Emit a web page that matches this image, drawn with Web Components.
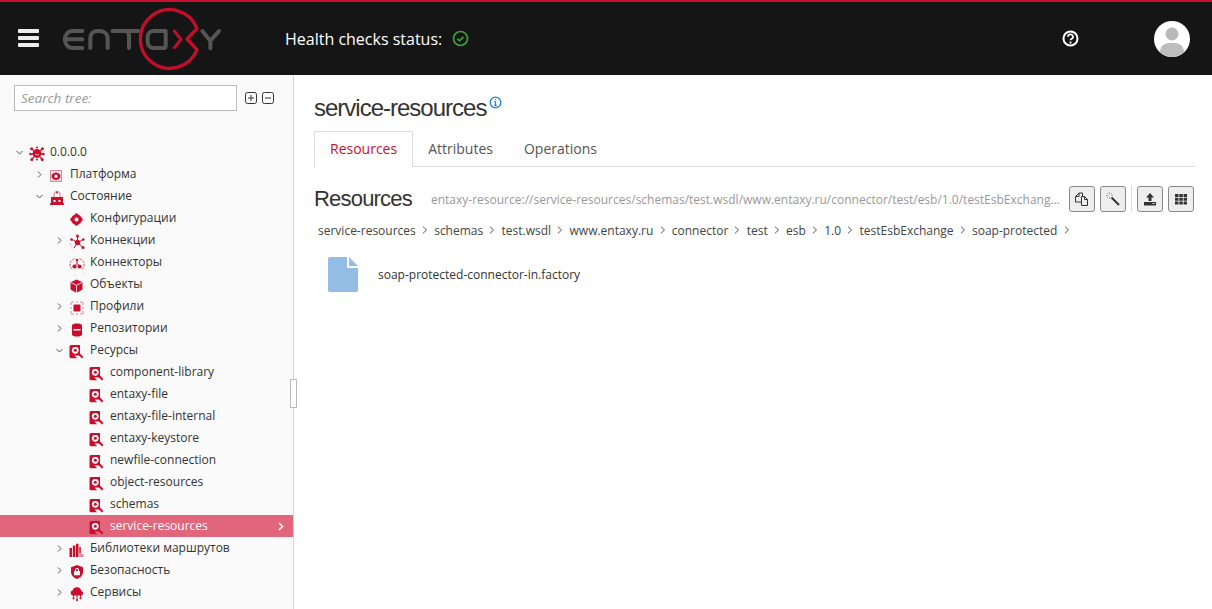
<!DOCTYPE html>
<html>
<head>
<meta charset="utf-8">
<title>service-resources</title>
<style>
  html, body { margin: 0; height: 100%; overflow: hidden; }
  body { font-family: "Open Sans", sans-serif; color: #333; background: #fff; }
  app-shell { height: 100%; }
</style>
</head>
<body>
<app-shell>
  <app-header slot="header"></app-header>
  <tree-panel slot="side">
    <tree-row level="0" toggle="open" icon="node" label="0.0.0.0"></tree-row>
    <tree-row level="1" toggle="closed" icon="platform" label="Платформа"></tree-row>
    <tree-row level="1" toggle="open" icon="state" label="Состояние"></tree-row>
    <tree-row level="2" icon="gear" label="Конфигурации"></tree-row>
    <tree-row level="2" toggle="closed" icon="conn" label="Коннекции"></tree-row>
    <tree-row level="2" icon="connector" label="Коннекторы"></tree-row>
    <tree-row level="2" icon="cube" label="Объекты"></tree-row>
    <tree-row level="2" toggle="closed" icon="profile" label="Профили"></tree-row>
    <tree-row level="2" toggle="closed" icon="db" label="Репозитории"></tree-row>
    <tree-row level="2" toggle="open" icon="res" label="Ресурсы"></tree-row>
    <tree-row level="3" icon="res" label="component-library"></tree-row>
    <tree-row level="3" icon="res" label="entaxy-file"></tree-row>
    <tree-row level="3" icon="res" label="entaxy-file-internal"></tree-row>
    <tree-row level="3" icon="res" label="entaxy-keystore"></tree-row>
    <tree-row level="3" icon="res" label="newfile-connection"></tree-row>
    <tree-row level="3" icon="res" label="object-resources"></tree-row>
    <tree-row level="3" icon="res" label="schemas"></tree-row>
    <tree-row level="3" icon="res" label="service-resources" selected></tree-row>
    <tree-row level="2" toggle="closed" icon="lib" label="Библиотеки маршрутов"></tree-row>
    <tree-row level="2" toggle="closed" icon="shield" label="Безопасность"></tree-row>
    <tree-row level="2" toggle="closed" icon="cloud" label="Сервисы"></tree-row>
  </tree-panel>
  <detail-pane slot="main"></detail-pane>
</app-shell>

<script>
const ICONS = {
  node: `<circle cx="8" cy="7.500" r="4.400"/><path d="M8 8 3 3M8 8l5-5M8 8H2M8 8h6M8 8l-5 5M8 8l5 5" stroke="#c8102e" stroke-width="1.300"/><circle cx="2.600" cy="2.800" r="1.500"/><circle cx="13.400" cy="2.800" r="1.500"/><circle cx="1.400" cy="8" r="1.200"/><circle cx="14.600" cy="8" r="1.200"/><circle cx="2.800" cy="13.400" r="1.500"/><circle cx="13.200" cy="13.400" r="1.500"/><circle cx="8" cy="1.600" r="1"/><circle cx="8" cy="13.500" r="1"/><path d="M5.800 8.200c.6 1.500 3.800 1.500 4.400 0z" fill="#f7c6cf"/>`,
  platform: `<path fill-rule="evenodd" d="M1 2h12v12H1zM2.200 3.200v9.600h9.600V3.200z" fill="#e58a9a"/><path fill-rule="evenodd" d="M7 4l1 .9 1.500-.2.700 1.300 1.300.8-.3 1.500.3 1.400-1.300.8-.7 1.300-1.500-.2-1 .9-1-.9-1.500.2-.7-1.300-1.300-.8.300-1.400-.3-1.500 1.300-.8.700-1.300 1.500.2zM7 6.600a1.700 1.700 0 1 0 0 3.400 1.700 1.700 0 0 0 0-3.400z"/>`,
  state: `<path d="M2 7h12v8H2z"/><path d="M5 7V4.500a3 3 0 0 1 6 0V7" fill="none" stroke="#e58a9a" stroke-width="1.200"/><path d="M8 1l1 1.500L8 4 7 2.500z"/><rect x="4.500" y="10" width="2" height="2" fill="#fff"/><rect x="9.500" y="10" width="2" height="2" fill="#fff"/><path d="M1 13.200h14v1.800H1z"/>`,
  gear: `<circle cx="7.500" cy="7.500" r="3.700" fill="none" stroke="#c8102e" stroke-width="3.300"/><path d="M6 1.500h3v2H6zM6 11.500h3v2H6zM1.500 6h2v3h-2zM11.500 6h2v3h-2z"/>`,
  conn: `<circle cx="8.500" cy="8.500" r="2.700"/><path d="M8.500 8.500V2M8.500 8.500 3 5.500M8.500 8.500l5.500-3M8.500 8.500 5 14M8.500 8.500l5.500 5" stroke="#c8102e" stroke-width="1"/><circle cx="8.500" cy="2" r="1.500"/><circle cx="2.500" cy="5.500" r="1.300"/><circle cx="14.300" cy="5.500" r="1.300"/><circle cx="14" cy="13.500" r="1.500"/><path d="M1.500 9.500a7 7 0 0 0 3 4.800" fill="none" stroke="#e58a9a" stroke-dasharray="1.500 1"/>`,
  connector: `<path d="M5.500 2.800A6 6 0 0 0 3.500 13.500M10.500 2.800A6 6 0 0 1 12.500 13.500" fill="none" stroke="#d8505f" stroke-width="1" stroke-dasharray="2.500 1"/><path d="M8 4.500v3L5.500 10M8 7.500l2.500 2.500" fill="none" stroke="#c8102e" stroke-width="1"/><circle cx="5.500" cy="10.500" r="2.100"/><circle cx="10.500" cy="10.500" r="2.100"/><circle cx="8" cy="4" r="1.300"/>`,
  cube: `<path d="M7.500 1.500l6 2.700v7.400L7.500 15l-6-3.400V4.200z"/><path d="M1.800 4.400l5.700 2.900 5.700-2.900M7.500 7.300V15" fill="none" stroke="#fff" stroke-width=".8"/>`,
  profile: `<rect x="4.500" y="4.500" width="7" height="7" rx="1"/><path d="M2 5V3.500A1.500 1.500 0 0 1 3.500 2H5M7 2h2M11 2h1.500A1.500 1.500 0 0 1 14 3.500V5M14 7v2M14 11v1.500a1.500 1.500 0 0 1-1.500 1.500H11M9 14H7M5 14H3.500A1.500 1.500 0 0 1 2 12.500V11M2 9V7" fill="none" stroke="#e58a9a" stroke-width="1.100"/>`,
  db: `<path fill-rule="evenodd" d="M3 3.500C3 2 5.500 1.500 8 1.500s5 .5 5 2v9c0 1.500-2.500 2-5 2s-5-.5-5-2zM4.500 7v1.500h7V7z"/>`,
  res: `<path d="M.5 2.500A1.500 1.500 0 0 1 2 1h9v10.500H5.500l2.700 2.800H2A1.500 1.500 0 0 1 .5 12.800z"/><circle cx="6.300" cy="6.300" r="3.400" fill="#fff"/><circle cx="6.300" cy="6.300" r="1.500"/><path d="M8.800 8.800l4.900 5" stroke="#c8102e" stroke-width="2"/>`,
  lib: `<path d="M.5 6H3v9H.5zM3.800 3.500h2.500V15H3.800zM7 1.800h2.500V15H7zM10.300 5h1.500v6.500h-1.500z"/><path d="M10.300 12h4.200v3h-4.200z" fill="#e58a9a"/>`,
  shield: `<path fill-rule="evenodd" d="M8 1l6 2.200V8c0 3.300-2.600 5.800-6 7-3.400-1.200-6-3.700-6-7V3.200zM5 7v4.300h6V7h-1V6a2 2 0 0 0-4 0v1zM7.100 7V6a.9.900 0 0 1 1.800 0v1z"/>`,
  cloud: `<path d="M3.500 9.500a2.700 2.700 0 0 1 .1-5.200 4.500 4.500 0 0 1 8.700.6 2.400 2.400 0 0 1 .3 4.600z"/><path d="M8 9v4M4.500 9v2.500M11.500 9v2.500" stroke="#c8102e"/><circle cx="8" cy="14" r="1.100"/><circle cx="4.500" cy="12.300" r="1.100"/><circle cx="11.500" cy="12.300" r="1.100"/>`
};

// shell: header on top, tree and details side by side
class AppShell extends HTMLElement {
  constructor() {
    super();
    this.attachShadow({ mode: 'open' }).innerHTML = `
      <style>
        :host { display: flex; flex-direction: column; }
        .body { flex: 1; display: flex; min-height: 0; position: relative; }
        .grip {
          position: absolute; left: 290px; top: 304px; width: 7px; height: 29px;
          background: #fff; border: 1px solid #bbb; box-sizing: border-box;
        }
      </style>
      <slot name="header"></slot>
      <div class="body">
        <slot name="side"></slot>
        <slot name="main"></slot>
        <div class="grip"></div>
      </div>`;
  }
}
customElements.define('app-shell', AppShell);

class AppHeader extends HTMLElement {
  constructor() {
    super();
    this.attachShadow({ mode: 'open' }).innerHTML = `
      <style>
        :host {
          display: flex; align-items: center; flex: none; box-sizing: border-box;
          height: 75px; background: #151515; border-top: 2px solid #c8102e; color: #fff;
        }
        .burger { margin-left: 18px; width: 21px; height: 18px; display: flex; flex-direction: column; justify-content: space-between; margin-top: -1px; }
        .burger i { display: block; height: 4px; background: #eee; border-radius: 1px; }
        .logo { margin-left: 16px; align-self: flex-start; margin-top: 3px; flex: none; }
        .status { margin-left: 55px; font-size: 16px; margin-top: 0; }
        .ok { margin-left: 10px; margin-top: -1px; }
        .help { margin-left: auto; margin-right: 75px; }
        .avatar { width: 36px; height: 36px; border-radius: 50%; background: #fff; margin-right: 22px; overflow: hidden; }
        svg { display: block; }
      </style>
      <div class="burger"><i></i><i></i><i></i></div>
      <svg class="logo" width="175" height="68" viewBox="0 0 525 204" fill="none" stroke-linecap="round" stroke-linejoin="round">
        <g stroke="#555" stroke-width="12">
          <path d="M82 78H52a22 25 0 0 0 0 51H82M34 103H82"/>
          <path d="M106 129V98a20 20 0 0 1 20-20h10a22 22 0 0 1 22 22v29"/>
          <path d="M172 78H250M210 78a12 12 0 0 1 12 12V129"/>
          <path d="M332 78H296a18 18 0 0 0-18 18v15a18 18 0 0 0 18 18h30a6 6 0 0 0 6-6z"/>
          <path d="M442 78l20 25a6 6 0 0 0 8 0L492 78M466 106V130"/>
        </g>
        <path d="M396 102 426 70A88 88 0 1 0 426 134Z" stroke="#c10f2b" stroke-width="10"/>
        <path d="M358 78l20 25-20 25" stroke="#c10f2b" stroke-width="9"/>
      </svg>
      <div class="status">Health checks status:</div>
      <svg class="ok" width="17" height="17" viewBox="0 0 17 17" fill="none" stroke="#3aa03a" stroke-width="1.700"><circle cx="8.500" cy="8.500" r="7"/><path d="M5.300 8.700l2.200 2.100 4-4"/></svg>
      <svg class="help" width="17" height="17" viewBox="0 0 17 17" fill="none"><circle cx="8.500" cy="8.500" r="7" stroke="#fff" stroke-width="2"/><path d="M6 6.800a2.500 2.300 0 1 1 3.600 2c-.8.400-1.100.8-1.100 1.500" stroke="#fff" stroke-width="1.800"/><circle cx="8.500" cy="12.600" r="1.100" fill="#fff"/></svg>
      <div class="avatar">
        <svg width="36" height="36" viewBox="0 0 36 36"><circle cx="18" cy="13" r="6.500" fill="#b9b9b9"/><path d="M6 31.500c0-6 4-9.500 9-9.500h6c5 0 9 3.500 9 9.500v4.500H6z" fill="#bdbdbd"/></svg>
      </div>`;
  }
}
customElements.define('app-header', AppHeader);

class TreePanel extends HTMLElement {
  constructor() {
    super();
    this.attachShadow({ mode: 'open' }).innerHTML = `
      <style>
        :host { display: block; width: 294px; flex: none; box-sizing: border-box; background: #fafafa; border-right: 1px solid #d6d6d6; overflow: hidden; }
        .search { display: flex; align-items: center; margin: 10px 0 0 14px; }
        input {
          width: 223px; height: 26px; box-sizing: border-box; border: 1px solid #bbb; background: #fff;
          padding: 0 6px; font: italic 13.500px "Open Sans", sans-serif; outline: none;
        }
        input::placeholder { color: #999; opacity: 1; }
        .btns { display: flex; gap: 5px; margin-left: 8px; }
        .tree { margin-top: 30px; }
        svg { display: block; }
      </style>
      <div class="search">
        <input placeholder="Search tree:">
        <div class="btns">
          <svg width="12" height="12" viewBox="0 0 12 12" fill="none" stroke="#333"><rect x=".5" y=".5" width="11" height="11" rx="2"/><path d="M3 6h6M6 3v6"/></svg>
          <svg width="12" height="12" viewBox="0 0 12 12" fill="none" stroke="#333"><rect x=".5" y=".5" width="11" height="11" rx="2"/><path d="M3 6h6"/></svg>
        </div>
      </div>
      <div class="tree"><slot></slot></div>`;
  }
}
customElements.define('tree-panel', TreePanel);

class TreeRow extends HTMLElement {
  constructor() {
    super();
    this.attachShadow({ mode: 'open' });
  }

  connectedCallback() {
    const level = Number(this.getAttribute('level'));
    const toggle = this.getAttribute('toggle');
    const icon = ICONS[this.getAttribute('icon')];
    const selected = this.hasAttribute('selected');
    let arrow = '';
    if (toggle === 'open') arrow = '<path d="M1.500 3l3 3 3-3"/>';
    if (toggle === 'closed') arrow = '<path d="M3 1.500l3 3-3 3"/>';
    this.shadowRoot.innerHTML = `
      <style>
        :host { display: block; height: 22px; }
        .row { display: flex; align-items: center; height: 22px; padding-left: ${15 + level * 20}px; font-size: 12px; color: #333; white-space: nowrap; }
        .row.sel { background: #e1667b; color: #fff; }
        .tog { width: 9px; height: 9px; flex: none; }
        .ico { width: 16px; height: 16px; margin-left: 5px; margin-top: 3px; flex: none; fill: #c8102e; }
        .txt { margin-left: 5px; margin-top: -1px; flex: 1; }
        .go { margin-right: 9px; }
      </style>
      <div class="row ${selected ? 'sel' : ''}">
        <svg class="tog" viewBox="0 0 9 9" fill="none" stroke="#555" stroke-width="1">${arrow}</svg>
        <svg class="ico" viewBox="0 0 16 16">${icon}</svg>
        <span class="txt">${this.getAttribute('label')}</span>
        ${selected ? '<svg class="go" width="6" height="9" viewBox="0 0 6 9" fill="none" stroke="#fff" stroke-width="1.500"><path d="M1 1l3.500 3.500L1 8"/></svg>' : ''}
      </div>`;
  }
}
customElements.define('tree-row', TreeRow);

class ToolButton extends HTMLElement {
  constructor() {
    super();
    this.attachShadow({ mode: 'open' }).innerHTML = `
      <style>
        :host {
          display: flex; align-items: center; justify-content: center; width: 26px; height: 26px;
          box-sizing: border-box; border: 1px solid #888; border-radius: 3px; background: #eee;
        }
      </style>
      <slot></slot>`;
  }
}
customElements.define('tool-button', ToolButton);

class DetailPane extends HTMLElement {
  constructor() {
    super();
    const crumbs = ['service-resources', 'schemas', 'test.wsdl', 'www.entaxy.ru', 'connector', 'test', 'esb', '1.0', 'testEsbExchange', 'soap-protected'];
    this.attachShadow({ mode: 'open' }).innerHTML = `
      <style>
        :host { display: block; flex: 1; min-width: 0; padding: 0 17px 0 20px; background: #fff; color: #333; }
        h1 { margin: 18px 0 0; display: flex; align-items: flex-start; font: 400 24px/30px "Liberation Sans", sans-serif; letter-spacing: -1px; }
        h1 svg { margin: 3px 0 0 3px; }
        .tabs { display: flex; height: 36px; margin-top: 8px; box-sizing: border-box; border-bottom: 1px solid #ddd; font-size: 14px; color: #555; }
        .tab { padding: 8px 16px 0 15px; height: 36px; box-sizing: border-box; }
        .tab.on { color: #c8102e; background: #fff; border: 1px solid #ddd; border-bottom: 0; padding: 7px 15px 0; }
        .bar { display: flex; align-items: center; margin: 19px 1px 0 0; height: 26px; }
        h2 { margin: 0; font: 400 22px "Liberation Sans", sans-serif; letter-spacing: -.8px; }
        .url { margin-left: 19px; flex: 1; min-width: 0; font-size: 12px; color: #999; overflow: hidden; white-space: nowrap; text-overflow: ellipsis; padding-right: 8px; }
        .tools { display: flex; align-items: center; gap: 5px; }
        .sep { width: 1px; height: 26px; background: #ddd; }
        .crumbs { display: flex; align-items: center; margin: 10px 0 0 4px; height: 16px; font-size: 12px; color: #444; white-space: nowrap; }
        .crumbs svg { margin: 0 6.200px; }
        .file { display: flex; align-items: center; margin: 19px 0 0 14px; font-size: 12px; }
        .file span { margin-left: 20px; }
        svg { display: block; }
      </style>
      <h1>service-resources
        <svg width="13" height="13" viewBox="0 0 13 13" fill="none" stroke="#1f86d6" stroke-width="1.300"><circle cx="6.500" cy="6.500" r="5.300"/><path d="M6.500 5.500v4M5.300 9.500h2.400M5.300 5.700h1.200"/><path d="M6.500 3v1.200"/></svg>
      </h1>
      <div class="tabs">
        <div class="tab on">Resources</div>
        <div class="tab">Attributes</div>
        <div class="tab">Operations</div>
      </div>
      <div class="bar">
        <h2>Resources</h2>
        <div class="url">entaxy-resource://service-resources/schemas/test.wsdl/www.entaxy.ru/connector/test/esb/1.0/testEsbExchange/soap-protected</div>
        <div class="tools">
          <tool-button><svg width="16" height="16" viewBox="0 0 16 16" fill="none" stroke="#333"><path d="M1.500 5.500 5 2h3.500v9h-7z"/><path d="M7.500 5.500h3l3 3V14.500h-6z" fill="#eee"/><path d="M1.500 5.500H5V2M10.500 5.500v3h3"/></svg></tool-button>
          <tool-button><svg width="16" height="16" viewBox="0 0 16 16" fill="none"><path d="M6.500 6.500 14 14" stroke="#333" stroke-width="2"/><path d="M4.500 1v2M4.500 6v2M1 4.500h2M6 4.500h2M2 2l1.200 1.200M7 2 5.800 3.200M2 7l1.200-1.200" stroke="#aaa"/></svg></tool-button>
          <div class="sep"></div>
          <tool-button><svg width="16" height="16" viewBox="0 0 16 16" fill="#333"><path d="M8 2l4 4.500H9.500V10h-3V6.500H4z"/><path d="M2 11h12v3.500H2z"/><path d="M10.500 12.500h2" stroke="#eee"/></svg></tool-button>
          <tool-button><svg width="14" height="14" viewBox="0 0 14 14" fill="#333"><path d="M1 2h3.500v3H1zM5.300 2h3.500v3H5.300zM9.600 2H13v3H9.600zM1 5.700h3.500v3H1zM5.300 5.700h3.500v3H5.300zM9.600 5.700H13v3H9.600zM1 9.400h3.500v3H1zM5.300 9.400h3.500v3H5.300zM9.600 9.400H13v3H9.600z"/></svg></tool-button>
        </div>
      </div>
      <div class="crumbs">${crumbs.map(c => `<span>${c}</span><svg width="6" height="8" viewBox="0 0 6 8" fill="none" stroke="#555"><path d="M1 .7l3.500 3.300L1 7.300"/></svg>`).join('')}</div>
      <div class="file">
        <svg width="30" height="35" viewBox="0 0 30 35"><path d="M2 0h17v11h11v22a2 2 0 0 1-2 2H2a2 2 0 0 1-2-2V2a2 2 0 0 1 2-2z" fill="#93bde5"/><path d="M21 0l9 9h-9z" fill="#93bde5"/></svg>
        <span>soap-protected-connector-in.factory</span>
      </div>`;
  }
}
customElements.define('detail-pane', DetailPane);
</script>
</body>
</html>
